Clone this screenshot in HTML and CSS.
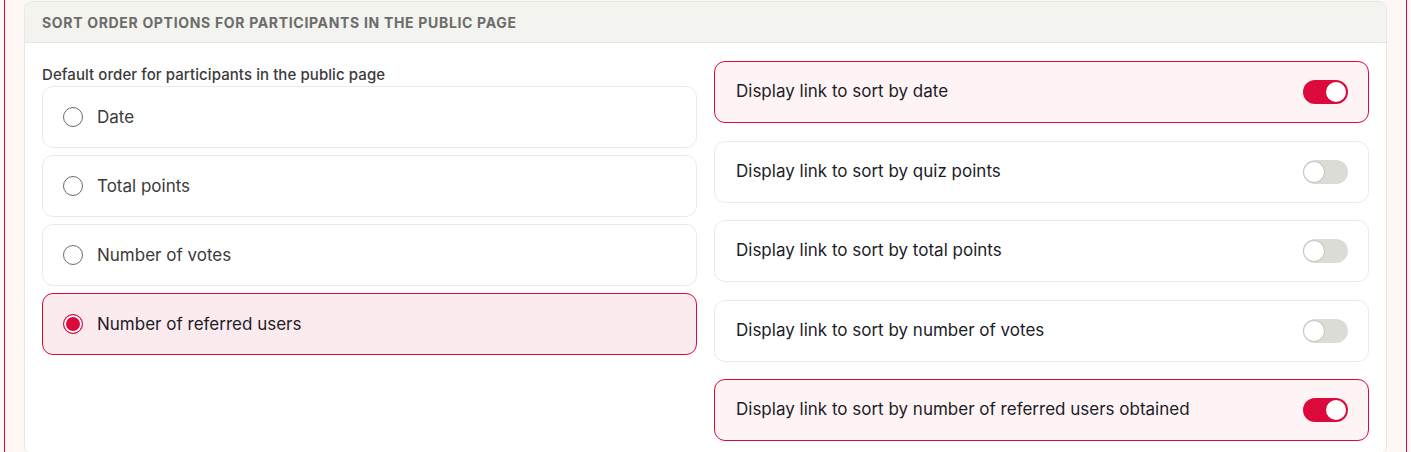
FILE: index.html
```html
<!DOCTYPE html>
<html lang="en">
<head>
<meta charset="utf-8">
<title>Sort order options</title>
<link rel="stylesheet" href="styles.css">
</head>
<body>
<div class="frame">
  <section class="card">
    <header class="card-head">Sort order options for participants in the public page</header>
    <div class="card-body">
      <div class="col">
        <div class="field-label">Default order for participants in the public page</div>
        <div class="radio-list">
          <label class="option"><span class="radio"></span><span class="option-text">Date</span></label>
          <label class="option"><span class="radio"></span><span class="option-text">Total points</span></label>
          <label class="option"><span class="radio"></span><span class="option-text">Number of votes</span></label>
          <label class="option is-checked"><span class="radio"></span><span class="option-text">Number of referred users</span></label>
        </div>
      </div>
      <div class="col toggle-list">
        <div class="switch-row is-on"><span class="switch-text">Display link to sort by date</span><span class="switch"></span></div>
        <div class="switch-row"><span class="switch-text">Display link to sort by quiz points</span><span class="switch"></span></div>
        <div class="switch-row"><span class="switch-text">Display link to sort by total points</span><span class="switch"></span></div>
        <div class="switch-row"><span class="switch-text">Display link to sort by number of votes</span><span class="switch"></span></div>
        <div class="switch-row is-on"><span class="switch-text">Display link to sort by number of referred users obtained</span><span class="switch"></span></div>
      </div>
    </div>
  </section>
</div>
</body>
</html>
```

FILE: styles.css
```css
* { box-sizing: border-box; }

html, body {
  margin: 0;
  background: #fdf8f5;
  font-family: Inter, "Noto Sans", sans-serif;
  height: 452px;
  overflow: hidden;
}

body {
  padding: 0 4px;
}

.frame {
  border-left: 1px solid #dc0a3c;
  border-right: 1px solid #dc0a3c;
  background: #fdf8f5;
  padding: 1px 19px 0;
  height: 452px;
}

.card {
  background: #ffffff;
  border: 1px solid #e8e8e3;
  border-radius: 8px;
  overflow: hidden;
}

.card-head {
  background: #f3f3ef;
  border-bottom: 1px solid #e6e6e1;
  height: 41px;
  padding: 0 17px;
  display: flex;
  align-items: center;
  text-transform: uppercase;
  font-size: 14px;
  font-weight: 700;
  letter-spacing: 0.68px;
  color: #6c6c6c;
}

.card-body {
  display: grid;
  grid-template-columns: 655px 655px;
  column-gap: 17px;
  padding: 18px 17px 12px;
}

.field-label {
  font-size: 15px;
  font-weight: 500;
  letter-spacing: 0.08px;
  color: #3b3b3b;
  line-height: 20px;
  padding-top: 4px;
  margin-bottom: 1px;
}

.radio-list {
  display: flex;
  flex-direction: column;
  gap: 7px;
}

.option {
  height: 62px;
  border: 1px solid #ebebe6;
  border-radius: 11px;
  display: flex;
  align-items: center;
  padding-left: 20px;
  gap: 14px;
  background: #ffffff;
}

.radio {
  width: 20px;
  height: 20px;
  border-radius: 50%;
  border: 1.5px solid #6a6a6a;
  flex: none;
}

.option-text {
  font-size: 17px;
  color: #3a3a3a;
}

.option.is-checked {
  background: #fcebee;
  border-color: #dc0a3c;
}

.option.is-checked .radio {
  border-color: #dc0a3c;
  background: #dc0a3c;
  box-shadow: inset 0 0 0 2px #ffffff;
}

.option.is-checked .option-text {
  color: #1c1c28;
}

.toggle-list {
  display: flex;
  flex-direction: column;
  gap: 17.5px;
}

.switch-row {
  height: 62px;
  border: 1px solid #ebebe6;
  border-radius: 11px;
  display: flex;
  align-items: center;
  justify-content: space-between;
  padding: 0 20px 0 21px;
  background: #ffffff;
}

.switch-text {
  font-size: 17px;
  color: #1c1c28;
  margin-bottom: 2px;
}

.switch {
  position: relative;
  width: 45px;
  height: 24px;
  border-radius: 12px;
  background: #dcdcd6;
  flex: none;
}

.switch::after {
  content: "";
  position: absolute;
  top: 2px;
  left: 1px;
  width: 20px;
  height: 20px;
  border-radius: 50%;
  background: #ffffff;
  box-shadow: 0 0 0 1px #c9c9c2;
}

.switch-row.is-on {
  background: #fff4f5;
  border-color: #dc0a3c;
}

.switch-row.is-on .switch {
  background: #dc0a3c;
}

.switch-row.is-on .switch::after {
  left: 23px;
  box-shadow: none;
}
```
